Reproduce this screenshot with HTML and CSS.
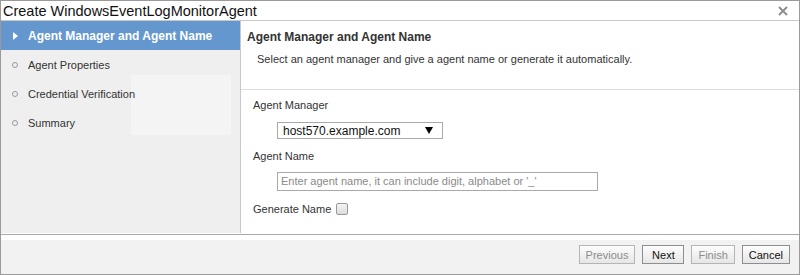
FILE: index.html
```html
<!DOCTYPE html>
<html>
<head>
    <link rel="stylesheet" href="styles.css">
</head>
<body>
    <div class="dialog">
        <div class="title-bar">
            <span class="title">Create WindowsEventLogMonitorAgent</span>
            <svg class="close" width="12" height="12" viewBox="0 0 12 12">
                <path d="M2 2 L10 10 M10 2 L2 10" stroke="#8a8a8a" stroke-width="1.8"/>
            </svg>
        </div>
        <div class="body">
            <div class="steps">
                <div class="step active">
                    <svg class="mark" width="8" height="8" viewBox="0 0 8 8"><path d="M1 0 L6 4 L1 8 Z" fill="#fff"/></svg>
                    <span>Agent Manager and Agent Name</span>
                </div>
                <div class="step">
                    <span class="dot"></span>
                    <span>Agent Properties</span>
                </div>
                <div class="step">
                    <span class="dot"></span>
                    <span>Credential Verification</span>
                </div>
                <div class="step">
                    <span class="dot"></span>
                    <span>Summary</span>
                </div>
            </div>
            <div class="content">
                <div class="intro">
                    <h2>Agent Manager and Agent Name</h2>
                    <p>Select an agent manager and give a agent name or generate it automatically.</p>
                </div>
                <div class="form">
                    <div class="label">Agent Manager</div>
                    <div class="select">
                        <span>host570.example.com</span>
                        <svg width="8" height="7" viewBox="0 0 8 7"><path d="M0 0 H8 L4 7 Z" fill="#000"/></svg>
                    </div>
                    <div class="label">Agent Name</div>
                    <div class="input">Enter agent name, it can include digit, alphabet or '_'</div>
                    <div class="label check-row">Generate Name <span class="checkbox"></span></div>
                </div>
            </div>
        </div>
        <div class="footer">
            <button class="btn disabled">Previous</button>
            <button class="btn next">Next</button>
            <button class="btn disabled">Finish</button>
            <button class="btn">Cancel</button>
        </div>
    </div>
</body>
</html>
```
FILE: styles.css
```css
html, body {
    margin: 0;
    padding: 0;
    background: #fff;
}
body {
    font-family: "Liberation Sans", Arial, sans-serif;
    font-size: 11px;
    color: #333;
}
.dialog {
    width: 800px;
    height: 275px;
    box-sizing: border-box;
    border: 1px solid #9a9a9a;
    display: flex;
    flex-direction: column;
}
.title-bar {
    height: 19px;
    border-bottom: 1px solid #c8c8c8;
    display: flex;
    align-items: center;
    justify-content: space-between;
    padding: 0 10px 0 2px;
}
.title {
    font-size: 14.5px;
    color: #111;
}
.body {
    display: flex;
    height: 212px;
}
.steps {
    width: 239px;
    border-right: 1px solid #c8c8c8;
    background: linear-gradient(#f4f4f4, #f4f4f4) 130px 54px / 100px 60px no-repeat, #efefef;
}
.step {
    height: 29px;
    display: flex;
    align-items: center;
    padding-left: 11px;
    color: #333;
}
.step.active {
    background: #6497cd;
    color: #fff;
    font-weight: bold;
    font-size: 12px;
}
.mark {
    margin-right: 8px;
}
.dot {
    width: 4px;
    height: 4px;
    border: 1px solid #999;
    border-radius: 50%;
    margin-right: 10px;
}
.content {
    flex: 1;
}
.intro {
    padding: 9px 0 0 6px;
    height: 59px;
    border-bottom: 1px solid #dcdcdc;
}
h2 {
    margin: 0;
    font-size: 12px;
    font-weight: bold;
    color: #333;
}
.intro p {
    margin: 9px 0 0 10px;
}
.form {
    padding: 8px 0 0 12px;
}
.label {
    height: 14px;
    line-height: 14px;
}
.select {
    margin: 10px 0 10px 24px;
    height: 15px;
    width: 150px;
    border: 1px solid #a9a9a9;
    display: flex;
    align-items: center;
    justify-content: space-between;
    padding: 0 9px 0 5px;
    font-size: 12px;
    color: #111;
}
.input {
    margin: 9px 0 11px 24px;
    width: 316px;
    height: 17px;
    line-height: 17px;
    border: 1px solid #a9a9a9;
    padding-left: 3px;
    color: #8a8a8a;
}
.check-row {
    display: flex;
    align-items: center;
}
.checkbox {
    width: 10px;
    height: 10px;
    border: 1px solid #9a9a9a;
    border-radius: 2px;
    background: linear-gradient(#f4f4f4, #dcdcdc);
    margin-left: 5px;
}
.footer {
    flex: 1;
    border-top: 1px solid #aaa;
    margin-top: 1px;
    background: linear-gradient(#fff, #fff) 0 0 / 100% 5px no-repeat, #f2f2f2;
    display: flex;
    justify-content: flex-end;
    align-items: center;
    gap: 7px;
    padding-right: 9px;
}
.btn {
    font-family: "Liberation Sans", Arial, sans-serif;
    font-size: 11px;
    height: 19px;
    padding: 0 6px;
    border: 1px solid #8e8e8e;
    background: linear-gradient(#fdfdfd, #e6e6e6);
    color: #111;
}
.btn.next {
    min-width: 42px;
}
.btn.disabled {
    color: #8c8c8c;
    border-color: #b5b5b5;
}
```
